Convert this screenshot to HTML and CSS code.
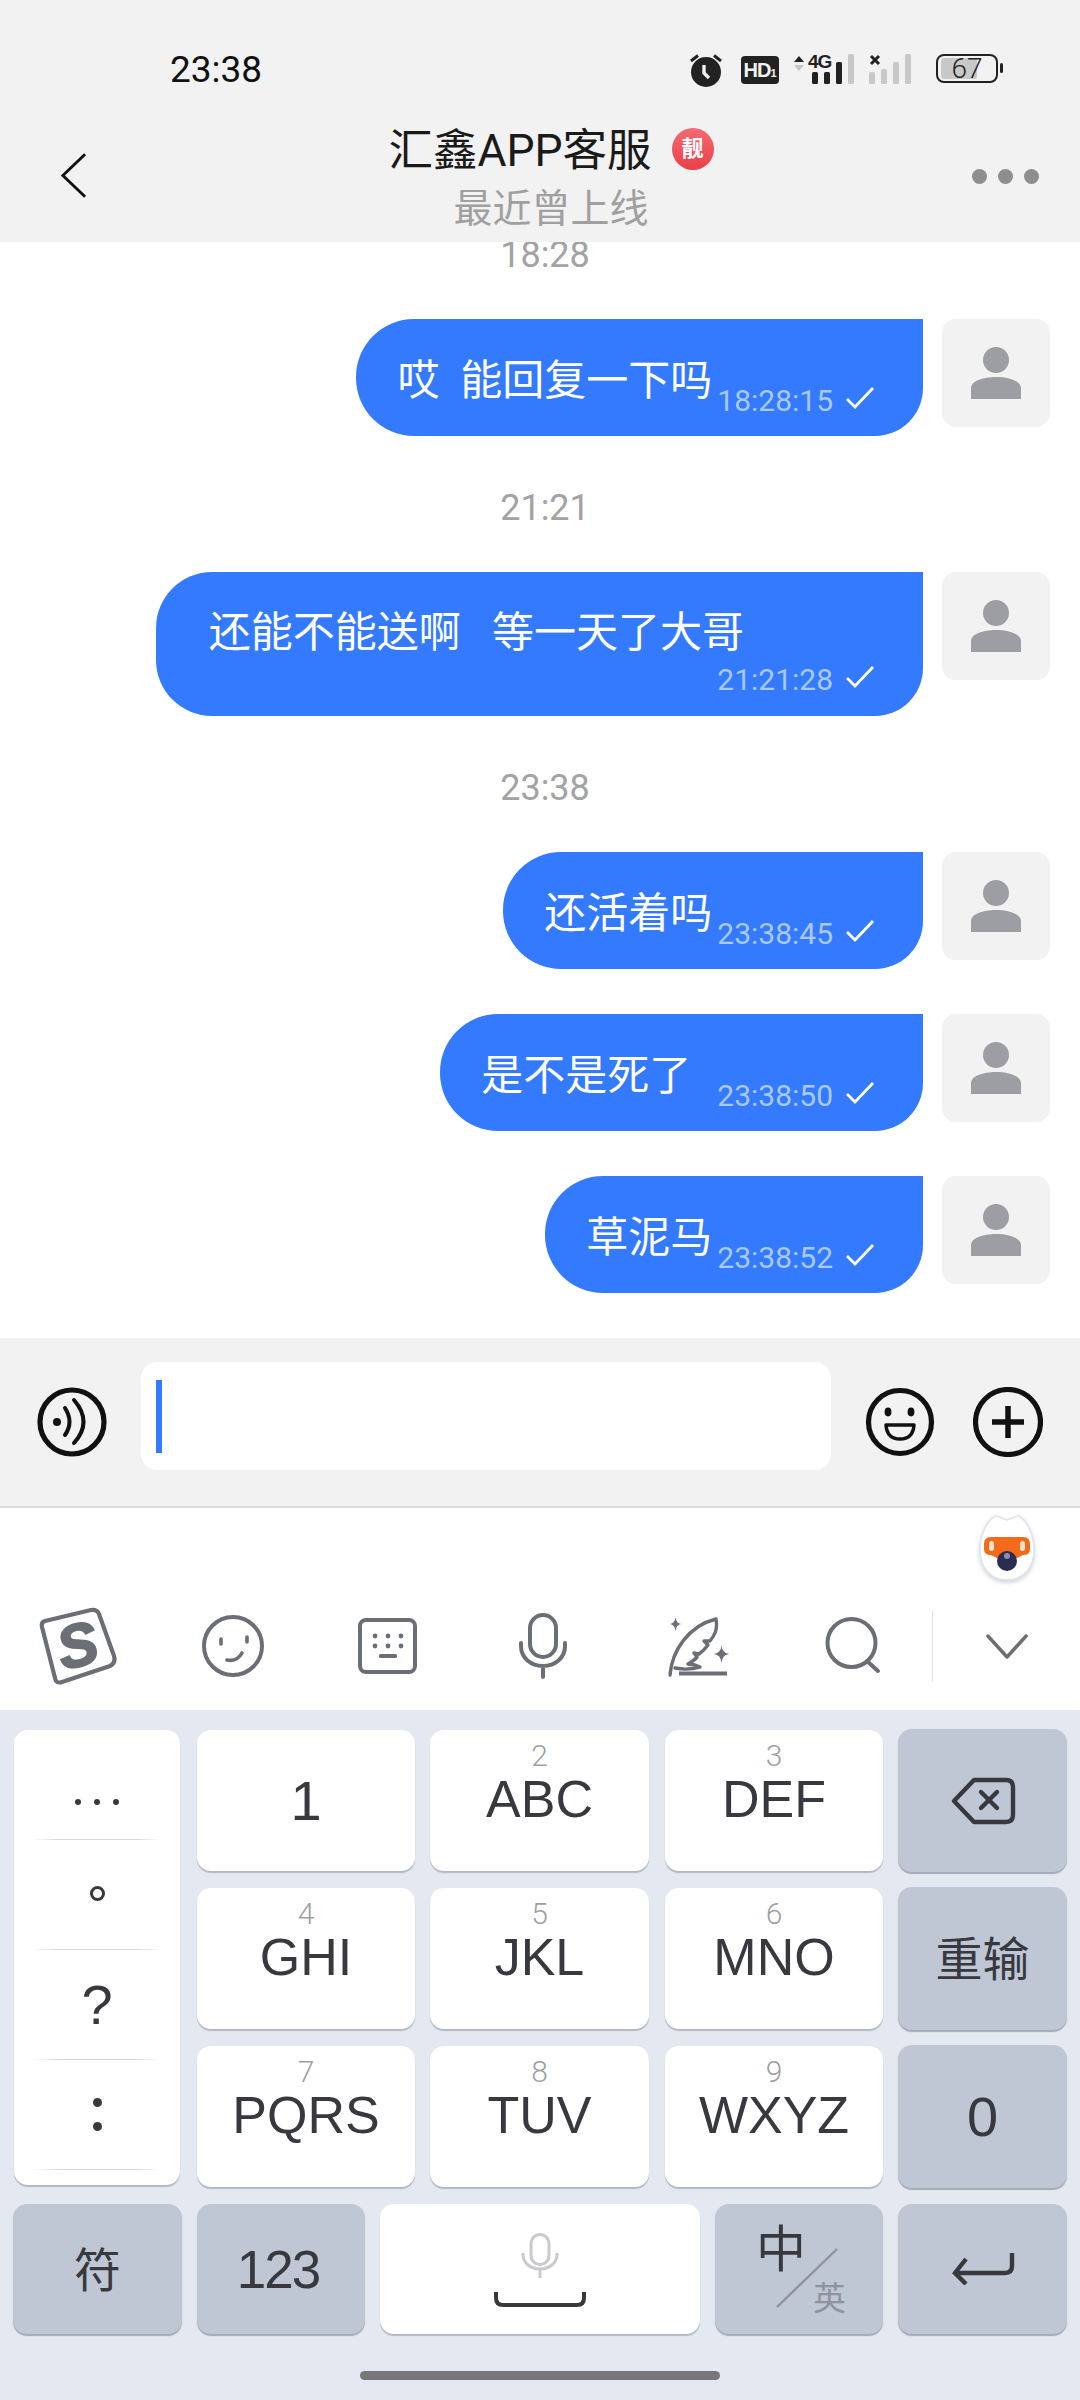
FILE: index.html
```html
<!DOCTYPE html>
<html lang="zh-CN">
<head>
<meta charset="utf-8">
<title>汇鑫APP客服</title>
<link rel="stylesheet" href="styles.css">
</head>
<body>
<div class="phone">
  <header class="head">
    <div class="status">
      <span class="clock">23:38</span>
      <div class="status-icons">
        <svg class="ic-alarm" viewBox="0 0 34 34"><circle cx="17" cy="19" r="15" fill="#222"/><path d="M2 8 L9 2.5 M32 8 L25 2.5" stroke="#222" stroke-width="3" fill="none"/><path d="M15 12 V20 L20 25" stroke="#f2f2f2" stroke-width="3.4" fill="none"/></svg>
        <div class="hd"><span class="hd-a">HD</span><span class="hd-b">1</span></div>
        <svg class="ic-signal" viewBox="0 -8 118 40">
          <path d="M0 9 L5 3 L10 9Z" fill="#222"/><path d="M0 12 L10 12 L5 18Z" fill="#c6c6c6"/>
          <text x="14" y="15" class="sig-text">4G</text>
          <rect x="18" y="19" width="6" height="12" rx="1.5" fill="#222"/><rect x="30" y="19" width="6" height="12" rx="1.5" fill="#222"/><rect x="42" y="9" width="6" height="22" rx="1.5" fill="#222"/><rect x="54" y="1" width="6" height="30" rx="1.5" fill="#c8c8c8"/>
          <path d="M77 3 L85 11 M85 3 L77 11" stroke="#222" stroke-width="3"/>
          <rect x="75" y="19" width="6" height="12" rx="1.5" fill="#c8c8c8"/><rect x="87" y="16" width="6" height="15" rx="1.5" fill="#c8c8c8"/><rect x="99" y="9" width="6" height="22" rx="1.5" fill="#c8c8c8"/><rect x="111" y="1" width="6" height="30" rx="1.5" fill="#c8c8c8"/>
        </svg>
        <div class="battery"><div class="battery-fill"></div><span class="battery-num">67</span><i class="battery-nub"></i></div>
      </div>
    </div>
    <div class="nav">
      <div class="nav-left"><svg class="ic-back" viewBox="0 0 28 48"><path d="M26 2 L3 24 L26 46" fill="none" stroke="#111" stroke-width="3"/></svg></div>
      <div class="nav-center">
        <div class="title-row"><span class="title">汇鑫APP客服</span><span class="badge">靓</span></div>
        <div class="subtitle">最近曾上线</div>
      </div>
      <div class="nav-right"><i class="dot"></i><i class="dot"></i><i class="dot"></i></div>
    </div>
  </header>

  <main class="chat">
    <div class="stamp stamp-first">18:28</div>
    <div class="row">
      <div class="bubble"><span class="msg">哎  能回复一下吗</span>
        <span class="meta"><span class="meta-time">18:28:15</span><svg class="ic-check" viewBox="0 0 30 24"><path d="M2 13 L10 21 L28 2" fill="none" stroke="#fff" stroke-width="2.8"/></svg></span></div>
      <div class="avatar"><svg class="ic-person" viewBox="0 0 50 52"><ellipse cx="25" cy="13" rx="13" ry="13" fill="#9c9ea3"/><path d="M0 52 V41 C0 34 12 30 25 30 C38 30 50 34 50 41 V52Z" fill="#9c9ea3"/></svg></div>
    </div>
    <div class="stamp">21:21</div>
    <div class="row">
      <div class="bubble bubble-tall"><span class="msg">还能不能送啊   等一天了大哥</span>
        <span class="meta meta-below"><span class="meta-time">21:21:28</span><svg class="ic-check" viewBox="0 0 30 24"><path d="M2 13 L10 21 L28 2" fill="none" stroke="#fff" stroke-width="2.8"/></svg></span></div>
      <div class="avatar"><svg class="ic-person" viewBox="0 0 50 52"><ellipse cx="25" cy="13" rx="13" ry="13" fill="#9c9ea3"/><path d="M0 52 V41 C0 34 12 30 25 30 C38 30 50 34 50 41 V52Z" fill="#9c9ea3"/></svg></div>
    </div>
    <div class="stamp">23:38</div>
    <div class="row row-tight">
      <div class="bubble"><span class="msg">还活着吗</span>
        <span class="meta"><span class="meta-time">23:38:45</span><svg class="ic-check" viewBox="0 0 30 24"><path d="M2 13 L10 21 L28 2" fill="none" stroke="#fff" stroke-width="2.8"/></svg></span></div>
      <div class="avatar"><svg class="ic-person" viewBox="0 0 50 52"><ellipse cx="25" cy="13" rx="13" ry="13" fill="#9c9ea3"/><path d="M0 52 V41 C0 34 12 30 25 30 C38 30 50 34 50 41 V52Z" fill="#9c9ea3"/></svg></div>
    </div>
    <div class="row row-tight">
      <div class="bubble bubble-wide"><span class="msg">是不是死了</span>
        <span class="meta"><span class="meta-time">23:38:50</span><svg class="ic-check" viewBox="0 0 30 24"><path d="M2 13 L10 21 L28 2" fill="none" stroke="#fff" stroke-width="2.8"/></svg></span></div>
      <div class="avatar"><svg class="ic-person" viewBox="0 0 50 52"><ellipse cx="25" cy="13" rx="13" ry="13" fill="#9c9ea3"/><path d="M0 52 V41 C0 34 12 30 25 30 C38 30 50 34 50 41 V52Z" fill="#9c9ea3"/></svg></div>
    </div>
    <div class="row row-tight">
      <div class="bubble"><span class="msg">草泥马</span>
        <span class="meta"><span class="meta-time">23:38:52</span><svg class="ic-check" viewBox="0 0 30 24"><path d="M2 13 L10 21 L28 2" fill="none" stroke="#fff" stroke-width="2.8"/></svg></span></div>
      <div class="avatar"><svg class="ic-person" viewBox="0 0 50 52"><ellipse cx="25" cy="13" rx="13" ry="13" fill="#9c9ea3"/><path d="M0 52 V41 C0 34 12 30 25 30 C38 30 50 34 50 41 V52Z" fill="#9c9ea3"/></svg></div>
    </div>
  </main>

  <section class="composer">
    <svg class="ic-round" viewBox="0 0 70 70"><circle cx="35" cy="35" r="32" fill="none" stroke="#111" stroke-width="5.2"/><circle cx="20" cy="35" r="4" fill="#111"/><path d="M28 21 Q37 35 28 48" fill="none" stroke="#111" stroke-width="4" stroke-linecap="round"/><path d="M37 13 Q56 35 37 56" fill="none" stroke="#111" stroke-width="4" stroke-linecap="round"/></svg>
    <div class="input"><i class="caret"></i></div>
    <svg class="ic-round ic-smile" viewBox="0 0 70 70"><circle cx="35" cy="35" r="31.5" fill="none" stroke="#111" stroke-width="5.2"/><ellipse cx="23" cy="25" rx="3.4" ry="4.4" fill="#111"/><ellipse cx="46" cy="25" rx="3.4" ry="4.4" fill="#111"/><path d="M21 38 H49 Q48 52 35 52 Q22 52 21 38Z" fill="none" stroke="#111" stroke-width="3.5" stroke-linejoin="round"/></svg>
    <svg class="ic-round ic-plus" viewBox="0 0 70 70"><circle cx="35" cy="35" r="32.5" fill="none" stroke="#111" stroke-width="5.2"/><path d="M35 19 V51 M19 35 H51" stroke="#111" stroke-width="5.5"/></svg>
  </section>

  <section class="toolbar">
    <svg class="mascot" viewBox="0 0 60 68">
      <path d="M30 6 C34 6 38 1 42 2 C52 8 57 24 57 36 C57 54 46 66 30 66 C14 66 3 54 3 36 C3 24 8 8 18 2 C22 1 26 6 30 6Z" fill="#fff" stroke="#dfe3ec" stroke-width="1.5"/>
      <path d="M7 30 Q7 23 14 23 H46 Q53 23 53 30 V35 Q53 41 46 41 L38 45 H22 L14 41 Q7 41 7 35Z" fill="#f36a1d"/>
      <rect x="12" y="27" width="5" height="10" rx="2.5" fill="#fde1c6"/><rect x="43" y="27" width="5" height="10" rx="2.5" fill="#fde1c6"/>
      <circle cx="30" cy="47" r="10" fill="#2a2d4f"/><circle cx="30" cy="42" r="3" fill="#8a8fb0"/>
    </svg>
    <div class="tools">
      <svg class="tool" viewBox="0 0 80 80"><path d="M7 15 L53 4 Q59 3 61 8 L76 50 Q78 57 72 60 L24 76 Q18 78 17 72 L4 21 Q3 16 7 15Z" fill="none" stroke="#6b6e75" stroke-width="4.2" stroke-linejoin="round"/><text x="40" y="60" class="s-logo" transform="rotate(-14 40 42)">S</text></svg>
      <svg class="tool" viewBox="0 0 80 80"><circle cx="40" cy="40" r="29" fill="none" stroke="#6b6e75" stroke-width="4"/><path d="M28 33 V38 M54 31 V36" stroke="#6b6e75" stroke-width="3.6" stroke-linecap="round"/><path d="M34 54 Q44 56 49 47" fill="none" stroke="#6b6e75" stroke-width="3.6" stroke-linecap="round"/></svg>
      <svg class="tool" viewBox="0 0 80 80"><rect x="12" y="14" width="55" height="52" rx="6" fill="none" stroke="#6b6e75" stroke-width="4"/><g fill="#6b6e75"><circle cx="27" cy="30" r="2.4"/><circle cx="40" cy="30" r="2.4"/><circle cx="53" cy="30" r="2.4"/><circle cx="27" cy="40" r="2.4"/><circle cx="40" cy="40" r="2.4"/><circle cx="53" cy="40" r="2.4"/><rect x="31" y="48" width="18" height="4" rx="1.5"/></g></svg>
      <svg class="tool" viewBox="0 0 80 80"><rect x="27" y="9" width="26" height="42" rx="13" fill="none" stroke="#6b6e75" stroke-width="4"/><path d="M18 37 V40 C18 52 28 60 40 60 C52 60 62 52 62 40 V37 M40 60 V71" fill="none" stroke="#6b6e75" stroke-width="4" stroke-linecap="round"/></svg>
      <svg class="tool" viewBox="0 0 80 80"><path d="M12 69 C14 45 30 20 58 13 C60 24 56 30 52 35 L46 35 L50 39 C47 43 44 46 41 48 L36 47 L39 51 C37 54 33 56 30 58 C36 58 40 60 42 61 C32 64 22 63 17 62" fill="none" stroke="#6b6e75" stroke-width="3.4" stroke-linecap="round" stroke-linejoin="round"/><path d="M21 67.5 H69" stroke="#6b6e75" stroke-width="4"/><path d="M17.5 11 Q18 17 23 18 Q18 19 17.5 25 Q17 19 12 18 Q17 17 17.5 11Z M63.5 39 Q64 47 71 48 Q64 49 63.5 57 Q63 49 56 48 Q63 47 63.5 39Z" fill="#6b6e75"/></svg>
      <svg class="tool" viewBox="0 0 80 80"><circle cx="38.5" cy="37" r="24" fill="none" stroke="#6b6e75" stroke-width="4"/><path d="M54 55 L65 65" stroke="#6b6e75" stroke-width="4" stroke-linecap="round"/></svg>
      <div class="tool-end"><svg class="tool-chevron" viewBox="0 0 44 26"><path d="M2 2 L22 24 L42 2" fill="none" stroke="#6b6e75" stroke-width="3.6" stroke-linecap="round" stroke-linejoin="round"/></svg></div>
    </div>
  </section>

  <section class="keyboard">
    <div class="keys">
      <div class="panel">
        <div class="cell cell-line cell-dots"><i class="p-dot"></i><i class="p-dot"></i><i class="p-dot"></i></div>
        <div class="cell cell-line"><i class="p-ring"></i></div>
        <div class="cell cell-line"><span class="p-q">?</span></div>
        <div class="cell cell-line cell-col"><i class="p-big"></i><i class="p-big"></i></div>
      </div>
      <div class="key key-big">1</div>
      <div class="key key-stack"><span class="num">2</span><span class="abc">ABC</span></div>
      <div class="key key-stack"><span class="num">3</span><span class="abc">DEF</span></div>
      <div class="key key-fn"><svg class="ic-del" viewBox="0 0 66 48"><path d="M24 3 H56 Q63 3 63 10 V38 Q63 45 56 45 H24 L4 24Z" fill="none" stroke="#38393e" stroke-width="4.4" stroke-linejoin="round"/><path d="M31 15 L47 31 M47 15 L31 31" stroke="#38393e" stroke-width="4.4" stroke-linecap="round"/></svg></div>
      <div class="key key-stack"><span class="num">4</span><span class="abc">GHI</span></div>
      <div class="key key-stack"><span class="num">5</span><span class="abc">JKL</span></div>
      <div class="key key-stack"><span class="num">6</span><span class="abc">MNO</span></div>
      <div class="key key-fn key-cjk">重输</div>
      <div class="key key-stack"><span class="num">7</span><span class="abc">PQRS</span></div>
      <div class="key key-stack"><span class="num">8</span><span class="abc">TUV</span></div>
      <div class="key key-stack"><span class="num">9</span><span class="abc">WXYZ</span></div>
      <div class="key key-fn key-big">0</div>
    </div>
    <div class="bottom-keys">
      <div class="key key-fn key-cjk">符</div>
      <div class="key key-fn key-123">123</div>
      <div class="key key-space">
        <svg class="ic-spacemic" viewBox="0 0 40 46"><rect x="11" y="1.5" width="18" height="30" rx="9" fill="none" stroke="#c9cace" stroke-width="3"/><path d="M3 20 V22 C3 30 11 36 20 36 C29 36 37 30 37 22 V20 M20 36 V45" fill="none" stroke="#c9cace" stroke-width="3"/></svg>
        <svg class="ic-bracket" viewBox="0 0 92 15"><path d="M2 0 V6 Q2 13 9 13 H83 Q90 13 90 6 V0" fill="none" stroke="#38393e" stroke-width="4"/></svg>
      </div>
      <div class="key key-fn key-lang">
        <span class="lang-zh">中</span><span class="lang-en">英</span>
        <svg class="ic-slash" viewBox="0 0 64 60"><path d="M62 1 L2 59" stroke="#8f939f" stroke-width="2.4"/></svg>
      </div>
      <div class="key key-fn"><svg class="ic-enter" viewBox="0 0 64 32"><path d="M61 0 V13 Q61 20 54 20 H5" fill="none" stroke="#38393e" stroke-width="4.4"/><path d="M15 6 L4 20 L15 31" fill="none" stroke="#38393e" stroke-width="4.4"/></svg></div>
    </div>
    <div class="home-bar"></div>
  </section>
</div>
</body>
</html>
```
FILE: styles.css
```css
* { box-sizing: border-box; }
html, body { margin: 0; padding: 0; }
body { width: 1080px; height: 2400px; overflow: hidden; background: #e4e8f0; font-family: Roboto, "Noto Sans CJK SC", sans-serif; color: #111; }
i { display: block; }
svg { display: block; flex: none; }
.phone { width: 1080px; height: 2400px; display: flex; flex-direction: column; overflow: hidden; }

/* header */
.head { height: 242px; flex: none; background: #f2f2f2; position: relative; z-index: 1; }
.status { height: 100px; display: flex; justify-content: space-between; align-items: flex-start; padding: 49px 78px 0 170px; }
.clock { font-size: 37px; line-height: 42px; color: #111; }
.status-icons { display: flex; align-items: flex-start; margin-top: 4px; }
.ic-alarm { width: 34px; height: 34px; }
.hd { width: 38px; height: 28px; margin: 3px 0 0 18px; background: #222; border-radius: 4px; color: #f2f2f2; display: flex; align-items: baseline; justify-content: center; font-family: "Liberation Sans", sans-serif; font-weight: 700; line-height: 28px; }
.hd-a { font-size: 20px; letter-spacing: -1px; }
.hd-b { font-size: 11px; }
.ic-signal { width: 118px; height: 40px; margin: -8px 0 0 15px; }
.sig-text { font-family: "Liberation Sans", sans-serif; font-weight: 700; font-size: 19px; letter-spacing: -1px; fill: #222; }
.battery { width: 62px; height: 29px; margin: 1px 4px 0 24px; border: 2.5px solid #222; border-radius: 8px; position: relative; display: flex; align-items: center; justify-content: center; }
.battery-fill { position: absolute; left: 3px; top: 2px; bottom: 2px; width: 36px; background: #c8c8c8; border-radius: 3px; }
.battery-num { position: relative; font-size: 28px; line-height: 24px; font-weight: 300; color: #222; }
.battery-nub { position: absolute; right: -7px; top: 7px; width: 3px; height: 10px; background: #222; border-radius: 2px; }

.nav { height: 142px; display: flex; }
.nav-left { width: 130px; padding: 30px 0 0 60px; }
.ic-back { width: 27px; height: 47px; margin-top: 22px; }
.nav-center { flex: 1; display: flex; flex-direction: column; align-items: center; padding-top: 27px; }
.title-row { display: flex; align-items: center; height: 48px; }
.title { font-size: 44.5px; line-height: 48px; color: #1a1a1a; }
.badge { width: 42px; height: 42px; margin: -4px 0 0 20px; border-radius: 50%; background: linear-gradient(#f56a72, #ea3f48); color: #fff; font-size: 22px; font-weight: 700; line-height: 42px; text-align: center; }
.subtitle { font-size: 39px; line-height: 48px; color: #a0a0a0; margin-top: 10px; }
.nav-right { width: 108px; padding: 10px 41px 0 0; display: flex; justify-content: space-between; align-items: center; }
.dot { width: 15px; height: 15px; background: #8e8e8e; border-radius: 50%; }

/* chat */
.chat { height: 1096px; flex: none; background: #fff; }
.stamp { font-size: 36px; line-height: 26px; color: #a3a3a3; text-align: center; padding-left: 10px; margin: 59px 0 51px; }
.stamp-first { margin: 0 0 51px; }
.row { display: flex; justify-content: flex-end; align-items: flex-start; gap: 19px; padding-right: 30px; }
.row-tight { margin-bottom: 45px; }
.bubble { height: 117px; background: #337aff; border-radius: 58px 0 48px 58px; padding: 37px 48px 0 41px; display: flex; align-items: flex-start; gap: 5px; }
.bubble-tall { height: 144px; padding: 36px 48px 0 53px; display: block; border-radius: 56px 0 48px 56px; }
.bubble-wide { gap: 26px; }
.msg { font-size: 42px; line-height: 50px; color: #fff; white-space: pre; }
.meta { display: flex; align-items: flex-start; gap: 12px; margin-top: 30px; flex: none; }
.meta-below { justify-content: flex-end; margin-top: 7px; }
.meta-time { font-size: 30px; line-height: 30px; color: #a9c9ff; }
.ic-check { width: 30px; height: 24px; }
.bubble-tall .msg { display: block; margin-right: 131px; }
.avatar { width: 108px; height: 108px; background: #f2f2f2; border-radius: 14px; display: flex; align-items: center; justify-content: center; }
.ic-person { width: 50px; height: 52px; }

/* composer */
.composer { height: 170px; flex: none; background: #f2f2f2; border-bottom: 2px solid #dcdcdc; display: flex; align-items: center; padding-left: 37px; }
.ic-round { width: 70px; height: 70px; }
.input { width: 690px; height: 108px; align-self: flex-start; margin: 24px 0 0 34px; background: #fff; border-radius: 16px; padding-left: 15px; display: flex; align-items: center; }
.caret { width: 6px; height: 73px; background: #337aff; }
.ic-smile { margin-left: 34px; }
.ic-plus { margin-left: 38px; }

/* toolbar */
.toolbar { height: 202px; flex: none; background: #fff; padding-top: 98px; position: relative; }
.mascot { position: absolute; top: 6px; right: 43px; width: 60px; height: 68px; filter: drop-shadow(0 2px 2px rgba(120,130,150,.35)); }
.tools { display: grid; grid-template-columns: repeat(6, 155px) 1fr; align-items: center; }
.tool { width: 80px; height: 80px; justify-self: center; }
.s-logo { font-family: "Liberation Sans", sans-serif; font-weight: 700; font-style: italic; font-size: 60px; text-anchor: middle; fill: #6b6e75; stroke: #6b6e75; stroke-width: 2px; }
.tool-end { height: 72px; margin-left: 2px; border-left: 1px solid #e2e3e5; display: flex; align-items: center; justify-content: center; }
.tool-chevron { width: 42px; height: 25px; }

/* keyboard */
.keyboard { flex: 1; background: #e4e8f0; padding-top: 20px; }
.keys { display: grid; grid-template-columns: 166px 218px 219px 218px 169px; grid-auto-rows: 141px; column-gap: 16px; row-gap: 17px; padding-left: 14px; }
.keys > :nth-child(4n+2) { margin: 0 -1px 0 1px; }
.panel { grid-row: 1 / 4; height: 455px; background: #fff; border-radius: 14px; box-shadow: 0 2px 1px #b3b8c4; padding: 0 20px 15px; display: flex; flex-direction: column; }
.cell { height: 110px; flex: none; display: flex; align-items: center; justify-content: center; }
.cell-line { border-bottom: 1px solid; border-image: linear-gradient(90deg, transparent, #d5d7dc 20%, #d5d7dc 80%, transparent) 1; }
.cell-dots { gap: 13px; align-items: flex-start; padding-top: 69px; }
.cell-col { flex-direction: column; gap: 15px; }
.p-dot { width: 6px; height: 6px; background: #38393e; border-radius: 50%; }
.p-ring { width: 15px; height: 15px; border: 3px solid #38393e; border-radius: 50%; margin-top: -2px; }
.p-q { font-family: "Liberation Sans", sans-serif; font-size: 56px; line-height: 56px; color: #38393e; }
.p-big { width: 9px; height: 9px; background: #38393e; border-radius: 50%; }
.key { background: #fff; border-radius: 14px; box-shadow: 0 2px 1px #b3b8c4; display: flex; align-items: center; justify-content: center; font-family: "Liberation Sans", sans-serif; color: #38393e; }
.key-stack { flex-direction: column; justify-content: flex-start; padding-top: 11px; }
.num { font-family: Roboto, sans-serif; font-weight: 300; font-size: 30px; line-height: 30px; color: #9f9f9f; }
.abc { font-size: 52px; line-height: 56px; }
.key-big { font-size: 56px; }
.keys .key-fn { margin: -1px 1px -1px -1px; }
.key-fn { background: #bfc7d5; box-shadow: 0 2px 1px #a4abb8; }
.key-cjk { font-family: "Noto Sans CJK SC", sans-serif; font-size: 47px; padding-bottom: 6px; }
.ic-del { width: 66px; height: 48px; }
.bottom-keys { display: grid; grid-template-columns: 169px 168px 320px 168px 169px; grid-auto-rows: 130px; column-gap: 15px; padding-left: 13px; margin-top: 17px; }
.key-123 { font-size: 53px; letter-spacing: -2px; padding-right: 6px; }
.key-space { flex-direction: column; gap: 13px; justify-content: flex-start; padding-top: 29px; }
.ic-spacemic { width: 40px; height: 46px; }
.ic-bracket { width: 92px; height: 15px; }
.key-lang { position: relative; display: grid; grid-template-columns: 57px 40px; grid-template-rows: 54px 40px; justify-content: start; align-content: start; padding: 14px 0 0 41px; font-family: "Noto Sans CJK SC", sans-serif; }
.lang-zh { font-size: 50px; line-height: 54px; }
.lang-en { grid-column: 2; grid-row: 2; font-size: 33px; line-height: 40px; color: #8f939f; margin-top: 8px; }
.ic-slash { position: absolute; left: 60px; top: 44px; width: 64px; height: 60px; }
.ic-enter { width: 64px; height: 32px; }
.home-bar { width: 360px; height: 9px; margin: 37px auto 0; background: #76777b; border-radius: 5px; }
```
